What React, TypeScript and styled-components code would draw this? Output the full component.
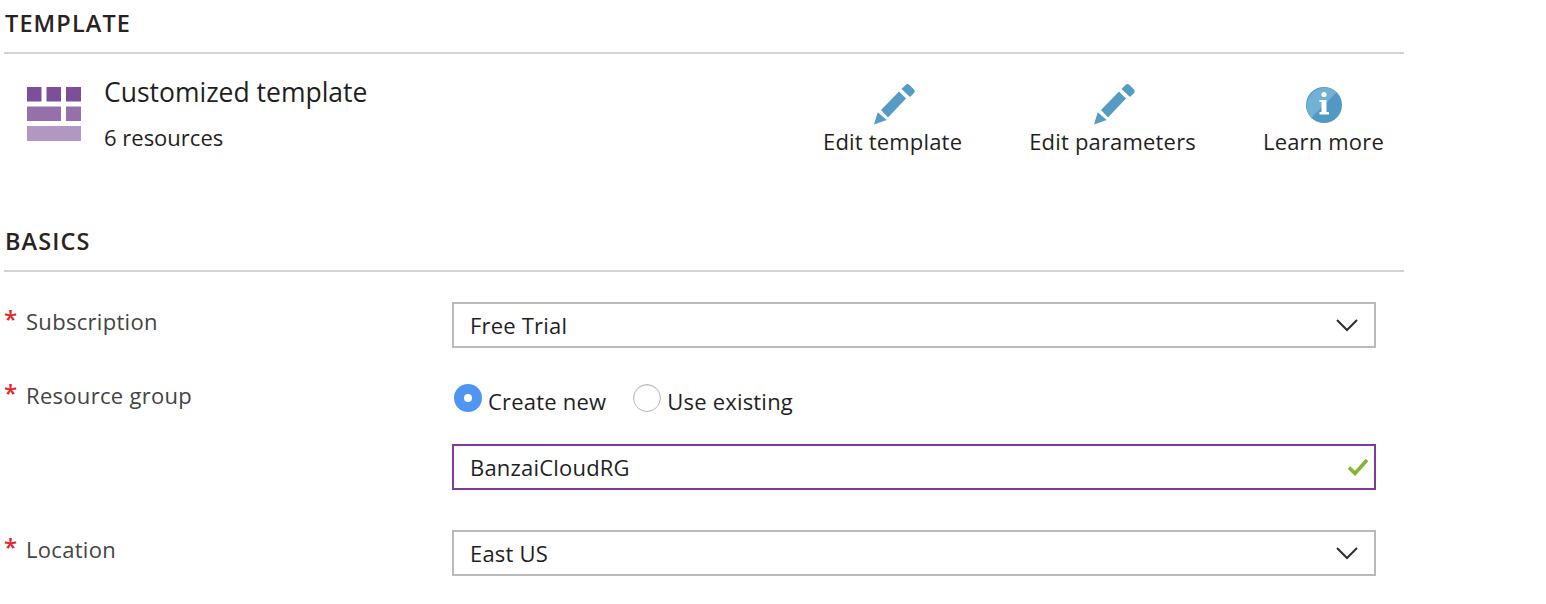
import styled, { createGlobalStyle } from 'styled-components';

const GlobalStyle = createGlobalStyle`
  html, body {
    margin: 0;
    padding: 0;
    background: #ffffff;
  }
  body {
    font-family: "Open Sans", "Noto Sans", "Liberation Sans", sans-serif;
    color: #1f1f1f;
  }
`;

const Page = styled.div`
  width: 1400px;
  height: 604px;
  margin-left: 4px;
  overflow: hidden;
`;

const SectionHeading = styled.h2`
  margin: 0;
  height: 54px;
  box-sizing: border-box;
  padding: 9px 0 0 1px;
  font-size: 23.5px;
  line-height: 28px;
  font-weight: 600;
  letter-spacing: 1.1px;
  color: #2a2220;
  border-bottom: 2px solid #d4d4d4;
`;

const TemplateRow = styled.div`
  display: flex;
  justify-content: space-between;
  height: 164px;
  padding-right: 20px;
`;

const TemplateInfo = styled.div`
  display: flex;
  align-items: flex-start;
  padding: 19px 0 0 23px;
  gap: 23px;
`;

const TemplateIcon = styled.svg`
  width: 54px;
  height: 54px;
  margin-top: 14px;
  flex: none;
`;

const TemplateText = styled.div`
  display: flex;
  flex-direction: column;
`;

const TemplateName = styled.div`
  font-size: 26.5px;
  line-height: 38px;
`;

const TemplateCount = styled.div`
  font-size: 22px;
  line-height: 30px;
  margin-top: 11px;
`;

const Actions = styled.div`
  display: flex;
  gap: 67px;
  padding-top: 30px;
`;

const Action = styled.div`
  display: flex;
  flex-direction: column;
  align-items: center;
  font-size: 22px;
  line-height: 30px;
  letter-spacing: 0.18px;
`;

const ActionIcon = styled.svg`
  width: 42px;
  height: 42px;
  margin-left: 2px;
  display: block;
`;

const FormBody = styled.div`
  padding-top: 30px;
`;

const FormRow = styled.div<{ $height: number }>`
  display: flex;
  height: ${p => p.$height}px;
`;

const LabelCell = styled.div`
  width: 448px;
  flex: none;
  display: flex;
  align-items: flex-start;
  padding-top: 1px;
  box-sizing: border-box;
`;

const Star = styled.span`
  color: #e0262c;
  width: 22px;
  font-size: 24px;
  font-weight: 600;
  line-height: 32px;
  box-sizing: border-box;
`;

const Label = styled.span`
  color: #444444;
  font-size: 22px;
  line-height: 36px;
  letter-spacing: 0.3px;
`;

const Control = styled.div`
  width: 924px;
  flex: none;
  display: flex;
  flex-direction: column;
`;

const Field = styled.div<{ $focused?: boolean }>`
  height: 46px;
  box-sizing: border-box;
  display: flex;
  align-items: center;
  justify-content: space-between;
  padding: 0 ${p => (p.$focused ? 5 : 15)}px 0 16px;
  border: 2px solid ${p => (p.$focused ? '#7f3a9c' : '#bababa')};
  font-size: 22px;
  letter-spacing: 0.2px;
  color: #1f1f1f;
`;

const RadioGroup = styled.div`
  height: 50px;
  margin-bottom: 18px;
  display: flex;
  align-items: center;
  padding-left: 2px;
`;

const RadioOption = styled.label`
  display: flex;
  align-items: center;
  gap: 6px;
  font-size: 22px;
  letter-spacing: 0.2px;
  margin-right: 27px;
`;

const RadioMark = styled.span<{ $checked?: boolean }>`
  width: 28px;
  height: 28px;
  margin-top: -6px;
  border-radius: 50%;
  box-sizing: border-box;
  display: flex;
  align-items: center;
  justify-content: center;
  background: ${p => (p.$checked ? '#4f96f2' : '#ffffff')};
  border: ${p => (p.$checked ? 'none' : '1px solid #b9b9b9')};
  box-shadow: ${p => (p.$checked ? 'none' : 'inset 0 1px 1px rgba(0, 0, 0, 0.12)')};

  &::after {
    content: '';
    display: ${p => (p.$checked ? 'block' : 'none')};
    width: 8px;
    height: 8px;
    border-radius: 50%;
    background: #ffffff;
  }
`;

const Chevron = () => (
  <svg width="24" height="14" viewBox="0 0 24 14">
    <path d="M2 2l10 10L22 2" fill="none" stroke="#2e2e2e" strokeWidth="2" />
  </svg>
);

const Check = () => (
  <svg width="22" height="18" viewBox="0 0 22 18">
    <path d="M2 9.500l6 6L20 2" fill="none" stroke="#84b432" strokeWidth="3.6" />
  </svg>
);

const Pencil = () => (
  <ActionIcon viewBox="0 0 42 42">
    <path d="M1 40.500L4.700 28.300 13.700 36z" fill="#559bc4" />
    <path d="M8 26L26 7.500 33 14.500 15 33.500z" fill="#559bc4" />
    <path d="M28.500 5L32.500 1C33.700-.2 35.300-.2 36.500 1L40.800 5.200C42 6.400 42 8 40.800 9.200L37 13z" fill="#559bc4" />
  </ActionIcon>
);

const Info = () => (
  <ActionIcon viewBox="0 0 42 42">
    <circle cx="21" cy="21" r="18" fill="#5199c4" />
    <path d="M8.300 33.700A18 18 0 0 1 33.700 8.300z" fill="#71b1d4" />
    <circle cx="21" cy="10.500" r="2.600" fill="#ffffff" />
    <path d="M16.500 16h7v12h2.500v2.500h-9.500v-2.500H18.500v-10h-2z" fill="#ffffff" />
  </ActionIcon>
);

export default function App() {
  return (
    <Page>
      <GlobalStyle />
      <SectionHeading>TEMPLATE</SectionHeading>
      <TemplateRow>
        <TemplateInfo>
          <TemplateIcon viewBox="0 0 54 54">
            <g fill="#7c4f98">
              <rect x="0" y="0" width="14.500" height="14.500" />
              <rect x="19.500" y="0" width="14.500" height="14.500" />
              <rect x="39" y="0" width="15" height="14.500" />
            </g>
            <g fill="#9670aa">
              <rect x="0" y="19.500" width="34" height="14.500" />
              <rect x="39" y="19.500" width="15" height="14.500" />
            </g>
            <rect x="0" y="39" width="54" height="15" fill="#b297c0" />
          </TemplateIcon>
          <TemplateText>
            <TemplateName>Customized template</TemplateName>
            <TemplateCount>6 resources</TemplateCount>
          </TemplateText>
        </TemplateInfo>
        <Actions>
          <Action><Pencil />Edit template</Action>
          <Action><Pencil />Edit parameters</Action>
          <Action><Info />Learn more</Action>
        </Actions>
      </TemplateRow>
      <SectionHeading>BASICS</SectionHeading>
      <FormBody>
        <FormRow $height={74}>
          <LabelCell><Star>*</Star><Label>Subscription</Label></LabelCell>
          <Control><Field>Free Trial<Chevron /></Field></Control>
        </FormRow>
        <FormRow $height={154}>
          <LabelCell><Star>*</Star><Label>Resource group</Label></LabelCell>
          <Control>
            <RadioGroup>
              <RadioOption><RadioMark $checked />Create new</RadioOption>
              <RadioOption><RadioMark />Use existing</RadioOption>
            </RadioGroup>
            <Field $focused>BanzaiCloudRG<Check /></Field>
          </Control>
        </FormRow>
        <FormRow $height={46}>
          <LabelCell><Star>*</Star><Label>Location</Label></LabelCell>
          <Control><Field>East US<Chevron /></Field></Control>
        </FormRow>
      </FormBody>
    </Page>
  );
}
